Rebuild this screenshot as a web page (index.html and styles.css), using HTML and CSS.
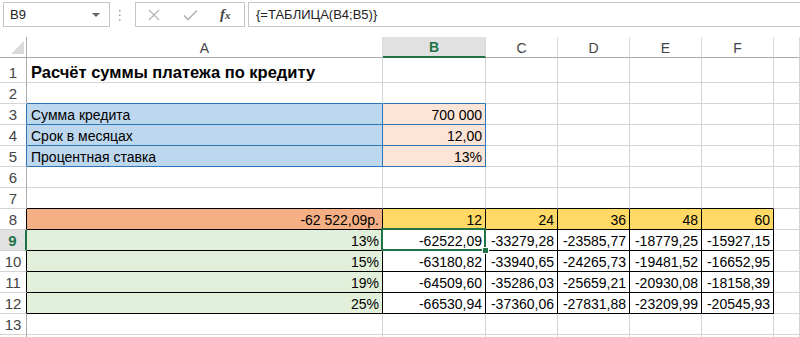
FILE: index.html
```html
<!DOCTYPE html>
<html lang="ru">
<head>
    <meta charset="UTF-8">
    <title>Расчёт суммы платежа по кредиту</title>
    <link rel="stylesheet" href="styles.css">
</head>
<body>

<div class="formula-bar">
    <div class="name-box">
        <span>B9</span>
        <span class="caret"></span>
    </div>
    <svg class="grip" width="3" height="12" viewBox="0 0 3 12">
        <rect x="1" y="1" width="1.5" height="1.5" fill="#9a9a9a"/>
        <rect x="1" y="5.5" width="1.5" height="1.5" fill="#9a9a9a"/>
        <rect x="1" y="10" width="1.5" height="1.5" fill="#9a9a9a"/>
    </svg>
    <div class="fx-buttons">
        <svg class="btn-cancel" width="12" height="12" viewBox="0 0 12 12">
            <path d="M1 1 L11 11 M11 1 L1 11" stroke="#b5b5b5" stroke-width="1.3" fill="none"/>
        </svg>
        <svg class="btn-enter" width="15" height="12" viewBox="0 0 15 12">
            <path d="M1 6.5 L5 10.5 L14 1.5" stroke="#b5b5b5" stroke-width="1.6" fill="none"/>
        </svg>
        <span class="btn-fx"><i>f</i><i class="x">x</i></span>
    </div>
    <div class="formula">{=ТАБЛИЦА(B4;B5)}</div>
</div>

<div class="sheet">
    <div class="row col-head">
        <div class="corner"><span></span></div>
        <div class="ch">A</div>
        <div class="ch sel">B</div>
        <div class="ch">C</div>
        <div class="ch">D</div>
        <div class="ch">E</div>
        <div class="ch">F</div>
        <div class="ch"></div>
    </div>

    <div class="row tall">
        <div class="rh">1</div>
        <div class="c title">Расчёт суммы платежа по кредиту</div>
        <div class="c"></div><div class="c"></div><div class="c"></div><div class="c"></div><div class="c"></div><div class="c"></div>
    </div>
    <div class="row">
        <div class="rh">2</div>
        <div class="c bb-blue"></div>
        <div class="c bb-blue"></div>
        <div class="c"></div><div class="c"></div><div class="c"></div><div class="c"></div><div class="c"></div>
    </div>
    <div class="row">
        <div class="rh blue-edge">3</div>
        <div class="c blue box-blue">Сумма кредита</div>
        <div class="c peach box-blue r">700 000</div>
        <div class="c"></div><div class="c"></div><div class="c"></div><div class="c"></div><div class="c"></div>
    </div>
    <div class="row">
        <div class="rh blue-edge">4</div>
        <div class="c blue box-blue">Срок в месяцах</div>
        <div class="c peach box-blue r">12,00</div>
        <div class="c"></div><div class="c"></div><div class="c"></div><div class="c"></div><div class="c"></div>
    </div>
    <div class="row">
        <div class="rh blue-edge">5</div>
        <div class="c blue box-blue">Процентная ставка</div>
        <div class="c peach box-blue r">13%</div>
        <div class="c"></div><div class="c"></div><div class="c"></div><div class="c"></div><div class="c"></div>
    </div>
    <div class="row">
        <div class="rh">6</div>
        <div class="c"></div><div class="c"></div><div class="c"></div><div class="c"></div><div class="c"></div><div class="c"></div><div class="c"></div>
    </div>
    <div class="row">
        <div class="rh">7</div>
        <div class="c bb"></div><div class="c bb"></div><div class="c bb"></div><div class="c bb"></div><div class="c bb"></div><div class="c bb"></div>
        <div class="c"></div>
    </div>
    <div class="row">
        <div class="rh dark-edge">8</div>
        <div class="c orange box r">-62 522,09р.</div>
        <div class="c yellow box r">12</div>
        <div class="c yellow box r">24</div>
        <div class="c yellow box r">36</div>
        <div class="c yellow box r">48</div>
        <div class="c yellow box r">60</div>
        <div class="c"></div>
    </div>
    <div class="row">
        <div class="rh sel">9</div>
        <div class="c green box r">13%</div>
        <div class="c box r active">-62522,09</div>
        <div class="c box r">-33279,28</div>
        <div class="c box r">-23585,77</div>
        <div class="c box r">-18779,25</div>
        <div class="c box r">-15927,15</div>
        <div class="c"></div>
    </div>
    <div class="row">
        <div class="rh dark-edge">10</div>
        <div class="c green box r">15%</div>
        <div class="c box r">-63180,82</div>
        <div class="c box r">-33940,65</div>
        <div class="c box r">-24265,73</div>
        <div class="c box r">-19481,52</div>
        <div class="c box r">-16652,95</div>
        <div class="c"></div>
    </div>
    <div class="row">
        <div class="rh dark-edge">11</div>
        <div class="c green box r">19%</div>
        <div class="c box r">-64509,60</div>
        <div class="c box r">-35286,03</div>
        <div class="c box r">-25659,21</div>
        <div class="c box r">-20930,08</div>
        <div class="c box r">-18158,39</div>
        <div class="c"></div>
    </div>
    <div class="row">
        <div class="rh dark-edge">12</div>
        <div class="c green box r">25%</div>
        <div class="c box r">-66530,94</div>
        <div class="c box r">-37360,06</div>
        <div class="c box r">-27831,88</div>
        <div class="c box r">-23209,99</div>
        <div class="c box r">-20545,93</div>
        <div class="c"></div>
    </div>
    <div class="row">
        <div class="rh">13</div>
        <div class="c"></div><div class="c"></div><div class="c"></div><div class="c"></div><div class="c"></div><div class="c"></div><div class="c"></div>
    </div>
    <div class="row">
        <div class="rh"></div>
        <div class="c"></div><div class="c"></div><div class="c"></div><div class="c"></div><div class="c"></div><div class="c"></div><div class="c"></div>
    </div>
</div>

</body>
</html>
```

FILE: styles.css
```css
body {
    margin: 0;
    height: 337px;
    overflow: hidden;
    font-family: "Liberation Sans", Arial, sans-serif;
    font-size: 14px;
    color: #000;
    background: #fff;
}

/* formula bar */

.formula-bar {
    display: flex;
    align-items: flex-start;
    height: 37px;
    padding-top: 2px;
    box-sizing: border-box;
}

.name-box {
    display: flex;
    align-items: center;
    margin-left: 3px;
    width: 107px;
    height: 25px;
    padding-left: 6px;
    box-sizing: border-box;
    border: 1px solid #c6c6c6;
    font-size: 13px;
    color: #222;
}

.name-box .caret {
    margin-left: auto;
    margin-right: 9px;
    border-left: 4px solid transparent;
    border-right: 4px solid transparent;
    border-top: 4px solid #666;
}

.grip {
    margin-left: 8px;
    margin-top: 7px;
}

.fx-buttons {
    display: flex;
    align-items: center;
    margin-left: 14px;
    width: 110px;
    height: 25px;
    box-sizing: border-box;
    border: 1px solid #c6c6c6;
}

.btn-cancel {
    margin-left: 12px;
}

.btn-enter {
    margin-left: 23px;
}

.btn-fx {
    margin-left: 22px;
    font-family: "Liberation Serif", "Times New Roman", serif;
    font-weight: bold;
    font-size: 15px;
    color: #444;
}

.btn-fx .x {
    font-size: 11px;
}

.formula {
    flex: 1;
    display: flex;
    align-items: center;
    margin-left: 3px;
    height: 25px;
    padding-left: 7px;
    box-sizing: border-box;
    border: 1px solid #c6c6c6;
    border-right: none;
    font-size: 13px;
    color: #222;
}

/* sheet grid */

.row {
    display: grid;
    grid-template-columns: 27px 356px 103px 72px 72px 72px 72px 1fr;
    height: 21px;
}

.row.tall {
    height: 25px;
}

.corner {
    display: flex;
    align-items: flex-end;
    justify-content: flex-end;
    padding: 0 2px 3px 0;
    border-right: 1px solid #ababab;
    border-bottom: 1px solid #ababab;
}

.corner span {
    width: 13px;
    height: 13px;
    background: #dadada;
    clip-path: polygon(100% 0, 100% 100%, 0 100%);
}

.ch {
    display: flex;
    align-items: center;
    justify-content: center;
    padding-top: 1px;
    border-right: 1px solid #dadada;
    border-bottom: 1px solid #ababab;
    color: #444;
}

.ch.sel {
    background: #e1e1e1;
    border-bottom: 2px solid #217346;
    color: #217346;
    font-weight: bold;
}

.rh {
    display: flex;
    align-items: flex-end;
    justify-content: center;
    padding-bottom: 1px;
    border-right: 1px solid #ababab;
    border-bottom: 1px solid #d4d4d4;
    line-height: 16px;
    font-size: 15px;
    color: #444;
}

.rh.sel {
    background: #e1e1e1;
    border-right: 2px solid #217346;
    color: #217346;
    font-weight: bold;
}

.rh.blue-edge {
    border-right-color: #2e75b6;
}

.rh.dark-edge {
    border-right-color: #000;
}

.c {
    display: flex;
    align-items: flex-end;
    padding: 0 3px 1px 4px;
    border-right: 1px solid #d4d4d4;
    border-bottom: 1px solid #d4d4d4;
    line-height: 16px;
    white-space: nowrap;
    overflow: hidden;
}

.c.r {
    justify-content: flex-end;
}

.c.title {
    font-size: 16.5px;
    font-weight: bold;
    line-height: 18px;
    overflow: visible;
}

/* fills */

.blue { background: #bdd7ee; }
.peach { background: #fce4d6; }
.orange { background: #f4b084; }
.yellow { background: #ffd966; }
.green { background: #e2efda; }

/* borders */

.bb-blue {
    border-bottom-color: #2e75b6;
}

.box-blue {
    border-right-color: #2e75b6;
    border-bottom-color: #2e75b6;
}

.bb {
    border-bottom-color: #000;
}

.box {
    border-right-color: #000;
    border-bottom-color: #000;
}

/* active cell */

.c.active {
    position: relative;
    overflow: visible;
}

.c.active::after {
    content: "";
    position: absolute;
    left: -2px;
    top: -2px;
    right: -1px;
    bottom: -1px;
    border: 2px solid #217346;
}

.c.active::before {
    content: "";
    position: absolute;
    right: -3px;
    bottom: -3px;
    width: 5px;
    height: 5px;
    background: #217346;
    outline: 1px solid #fff;
    z-index: 1;
}
```
